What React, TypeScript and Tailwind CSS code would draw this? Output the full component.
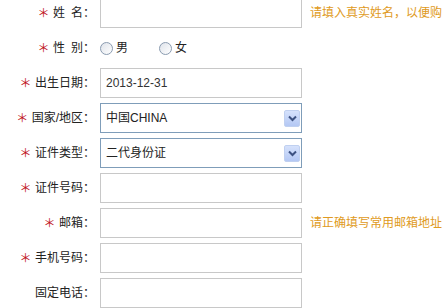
import React from "react";

const cjk = { fontFamily: '"Liberation Sans", "Noto Sans CJK SC", sans-serif' };

function Star() {
  return (
    <span className="inline-block w-[9px] mr-[5px] text-center text-[12px] leading-none text-[#c0121b]" style={{ fontFamily: '"Noto Sans CJK SC", sans-serif' }}>
      <span className="inline-block -mx-[2px]">＊</span>
    </span>
  );
}

function Label({ req, children }: { req?: boolean; children: React.ReactNode }) {
  return (
    <div className="w-[95px] shrink-0 flex items-center justify-end whitespace-nowrap text-[12px] text-[#222]" style={cjk}>
      {req && <Star />}
      {children}
      <span>：</span>
    </div>
  );
}

function TextBox({ value }: { value?: string }) {
  return (
    <div className="ml-[5px] w-[202px] h-[30px] shrink-0 border border-[#c8c8c8] bg-white flex items-center pl-[5px] text-[12px] text-[#333]" style={cjk}>
      {value}
    </div>
  );
}

function SelectBox({ value }: { value: string }) {
  return (
    <div className="ml-[5px] w-[202px] h-[30px] shrink-0 border border-[#7f9db9] bg-white flex items-center justify-between pl-[5px] pr-[1px] text-[12px] text-[#222]" style={cjk}>
      <span>{value}</span>
      <div className="w-[16px] h-[17px] rounded-[2px] bg-gradient-to-b from-[#d6e2fc] to-[#b4c8f4] border border-[#c0d0f0] flex items-center justify-center">
        <svg width="9" height="7" viewBox="0 0 9 7">
          <path d="M1 1.5 L4.5 5 L8 1.5" fill="none" stroke="#3d5282" strokeWidth="2" />
        </svg>
      </div>
    </div>
  );
}

function Hint({ children }: { children: React.ReactNode }) {
  return (
    <div className="ml-[8px] whitespace-nowrap text-[12px] text-[#e09a22]" style={cjk}>
      {children}
    </div>
  );
}

function Radio() {
  return (
    <span className="inline-block w-[13px] h-[13px] rounded-full border border-[#8a9bb0] bg-gradient-to-br from-[#dfe3ea] to-[#ffffff]" />
  );
}

function Row({ children }: { children: React.ReactNode }) {
  return <div className="flex items-center h-[30px]">{children}</div>;
}

export default function App() {
  return (
    <div className="w-[444px] h-[308px] overflow-hidden bg-white">
      <div className="flex flex-col gap-[5px] -mt-[2px]">
        <Row>
          <Label req>
            <span>姓</span>
            <span className="inline-block w-[6px]" />
            <span>名</span>
          </Label>
          <TextBox />
          <Hint>请填入真实姓名，以便购</Hint>
        </Row>
        <Row>
          <Label req>
            <span>性</span>
            <span className="inline-block w-[6px]" />
            <span>别</span>
          </Label>
          <div className="ml-[5px] flex items-center text-[12px] text-[#222]" style={cjk}>
            <Radio />
            <span className="ml-[3px]">男</span>
            <span className="ml-[31px] flex items-center">
              <Radio />
            </span>
            <span className="ml-[3px]">女</span>
          </div>
        </Row>
        <Row>
          <Label req>出生日期</Label>
          <TextBox value="2013-12-31" />
        </Row>
        <Row>
          <Label req>国家/地区</Label>
          <SelectBox value="中国CHINA" />
        </Row>
        <Row>
          <Label req>证件类型</Label>
          <SelectBox value="二代身份证" />
        </Row>
        <Row>
          <Label req>证件号码</Label>
          <TextBox />
        </Row>
        <Row>
          <Label req>邮箱</Label>
          <TextBox />
          <Hint>请正确填写常用邮箱地址</Hint>
        </Row>
        <Row>
          <Label req>手机号码</Label>
          <TextBox />
        </Row>
        <Row>
          <Label>固定电话</Label>
          <TextBox />
        </Row>
      </div>
    </div>
  );
}
